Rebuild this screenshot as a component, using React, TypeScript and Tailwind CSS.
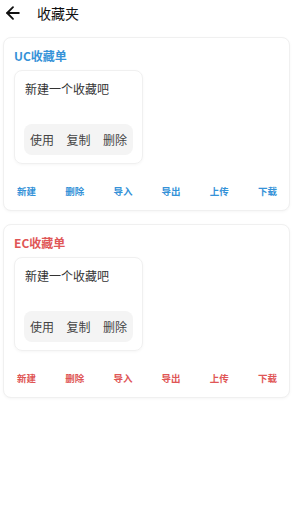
import { ArrowLeft } from 'lucide-react'

const font = { fontFamily: '"Noto Sans CJK SC", "Noto Sans", sans-serif' }

type Tone = 'blue' | 'red'

function FavCard({ title, tone }: { title: string; tone: Tone }) {
  const color = tone === 'blue' ? 'text-[#3592d8]' : 'text-[#e05656]'
  const actions = ['新建', '删除', '导入', '导出', '上传', '下载']
  return (
    <div className="rounded-[8px] border border-[#f0f0f0] bg-white shadow-[0_1px_3px_rgba(0,0,0,0.04)]">
      <div className={`pl-[10px] pt-[10px] text-[12px] font-semibold leading-[16px] ${color}`}>{title}</div>
      <div className="ml-[10px] mt-[6px] w-[129px] h-[94px] rounded-[8px] border border-[#f0f0f0] shadow-[0_1px_3px_rgba(0,0,0,0.04)] flex flex-col justify-between px-[9px] pt-[10px] pb-[8px]">
        <div className="pl-[1px] text-[12px] leading-[16px] text-[#333]">新建一个收藏吧</div>
        <div className="flex h-[31px] items-center justify-between rounded-[8px] bg-[#f4f4f4] px-[6px] text-[12px] text-[#444]">
          <span>使用</span>
          <span>复制</span>
          <span>删除</span>
        </div>
      </div>
      <div className={`flex justify-between pl-[13px] pr-[12px] pt-[21px] pb-[13px] text-[9.5px] font-bold leading-[12px] ${color}`}>
        {actions.map(a => (
          <span key={a}>{a}</span>
        ))}
      </div>
    </div>
  )
}

export default function App() {
  return (
    <div className="w-[293px] h-[515px] bg-white" style={font}>
      <div className="flex h-[37px] items-start pt-[2px] pl-[3px]">
        <ArrowLeft size={20} strokeWidth={2.2} className="text-[#111] mt-[1px]" />
        <span className="ml-[14px] text-[14px] leading-[22px] text-[#111]">收藏夹</span>
      </div>
      <div className="flex flex-col gap-[13px] px-[3px]">
        <FavCard title="UC收藏单" tone="blue" />
        <FavCard title="EC收藏单" tone="red" />
      </div>
    </div>
  )
}
